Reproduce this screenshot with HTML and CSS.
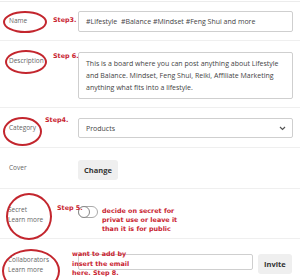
FILE: index.html
```html
<!DOCTYPE html>
<html lang="en">
<head>
  <meta charset="UTF-8" />
  <title>Edit board</title>
  <link rel="stylesheet" href="styles.css">
</head>
<body>

<div class="form">

  <div class="row row-name">
    <div class="label">Name</div>
    <div class="field">#Lifestyle &nbsp;#Balance #Mindset #Feng Shui and more</div>
    <i class="ring ring-name"></i>
    <b class="note note-name">Step3.</b>
  </div>

  <div class="row row-desc">
    <div class="label">Description</div>
    <div class="field area">This is a board where you can post anything about Lifestyle and Balance. Mindset, Feng Shui, Reiki, Affiliate Marketing anything what fits into a lifestyle.</div>
    <i class="ring ring-desc"></i>
    <b class="note note-desc">Step 6.</b>
  </div>

  <div class="row row-cat">
    <div class="label">Category</div>
    <div class="field select">
      <span>Products</span>
      <svg width="7" height="5" viewBox="0 0 7 5"><path d="M1 1l2.5 2.5L6 1" fill="none" stroke="#555" stroke-width="1.2"/></svg>
    </div>
    <i class="ring ring-cat"></i>
    <b class="note note-cat">Step4.</b>
  </div>

  <div class="row row-cover">
    <div class="label">Cover</div>
    <div><button class="btn">Change</button></div>
  </div>

  <div class="row row-secret">
    <div class="label">Secret<br>Learn more</div>
    <div class="secret">
      <span class="toggle"><span class="knob"></span></span>
      <b class="note-text">decide on secret for<br>privat use or leave it<br>than it is for public</b>
    </div>
    <i class="ring ring-secret"></i>
    <b class="note note-secret">Step 5.</b>
  </div>

  <div class="row row-collab">
    <div class="label">Collaborators<br>Learn more</div>
    <div class="collab">
      <div class="field small"></div>
      <button class="btn">Invite</button>
    </div>
    <i class="ring ring-collab"></i>
    <b class="note note-collab">want to add by<br>insert the email<br>here. Step 8.</b>
  </div>

</div>

</body>
</html>
```

FILE: styles.css
```css
body {
  margin: 0;
  background: #fff;
  font-family: 'Open Sans', sans-serif;
  color: #444;
  overflow: hidden;
}

.form {
  margin-top: 1px;
  border-top: 1px solid #ececec;
}

.row {
  position: relative;
  display: grid;
  grid-template-columns: 78px 215px;
  align-items: center;
  box-sizing: border-box;
  border-bottom: 1px solid #efefef;
}

.row-name { height: 39px; }
.row-desc { height: 67px; }
.row-cat { height: 40px; }
.row-cover { height: 41px; }
.row-secret { height: 50px; align-items: start; }
.row-collab { height: 48px; border-bottom: none; }

.label {
  padding-left: 9px;
  font-size: 6.5px;
  line-height: 10px;
  color: #666;
}

.row-desc .label {
  align-self: start;
  margin-top: 15px;
}

.row-secret .label {
  margin-top: 16px;
  padding-left: 8px;
}

.row-collab .label {
  padding-left: 8px;
  margin-top: 4px;
}

.field {
  box-sizing: border-box;
  height: 21px;
  padding: 0 7px;
  border: 1px solid #cfcfcf;
  border-radius: 2px;
  font-size: 7px;
  line-height: 19px;
  color: #444;
  white-space: nowrap;
}

.field.area {
  height: 47px;
  margin-top: 2px;
  padding: 5px 7px;
  line-height: 12px;
  white-space: normal;
}

.field.select {
  height: 20px;
  display: flex;
  align-items: center;
  justify-content: space-between;
  padding-right: 6px;
  margin-top: 1px;
}

.field.small {
  height: 16px;
  width: 175px;
}

.btn {
  height: 20px;
  padding: 0 6px;
  border: none;
  border-radius: 3px;
  background: #efefef;
  font-family: 'Open Sans', sans-serif;
  font-weight: bold;
  font-size: 7.5px;
  color: #333;
}

.secret {
  display: flex;
  gap: 4px;
  margin-top: 17px;
}

.toggle {
  display: block;
  width: 20px;
  height: 12px;
  box-sizing: border-box;
  border: 1px solid #aaa;
  border-radius: 6px;
  position: relative;
  flex-shrink: 0;
}

.knob {
  position: absolute;
  left: -1px;
  top: -1px;
  width: 12px;
  height: 12px;
  box-sizing: border-box;
  border: 1px solid #888;
  border-radius: 50%;
  background: #fff;
}

.note-text {
  margin-top: 1px;
  font-family: 'DejaVu Sans', sans-serif;
  font-size: 6.4px;
  line-height: 9px;
  color: #c8232f;
}

.collab {
  display: flex;
  gap: 5px;
  align-self: start;
  margin-top: 15px;
}

/* annotations drawn over the form */
.ring {
  position: absolute;
  box-sizing: border-box;
  border: 2px solid #c3262e;
  border-radius: 50%;
}

.ring-name { left: 3px; top: 9px; width: 44px; height: 22px; }
.ring-desc { left: 5px; top: 9px; width: 42px; height: 24px; }
.ring-cat { left: 3px; top: 9px; width: 39px; height: 29px; }
.ring-secret { left: 6px; top: 4px; width: 46px; height: 47px; }
.ring-collab { left: 2px; top: 10px; width: 58px; height: 44px; }

.note {
  position: absolute;
  font-family: 'DejaVu Sans', sans-serif;
  font-size: 6.4px;
  line-height: 9px;
  color: #c8232f;
}

.note-name { left: 53px; top: 14px; }
.note-desc { left: 53px; top: 11px; }
.note-cat { left: 45px; top: 8px; }
.note-secret { left: 57px; top: 15px; }
.note-collab { left: 72px; top: 11px; line-height: 9.5px; }
```
